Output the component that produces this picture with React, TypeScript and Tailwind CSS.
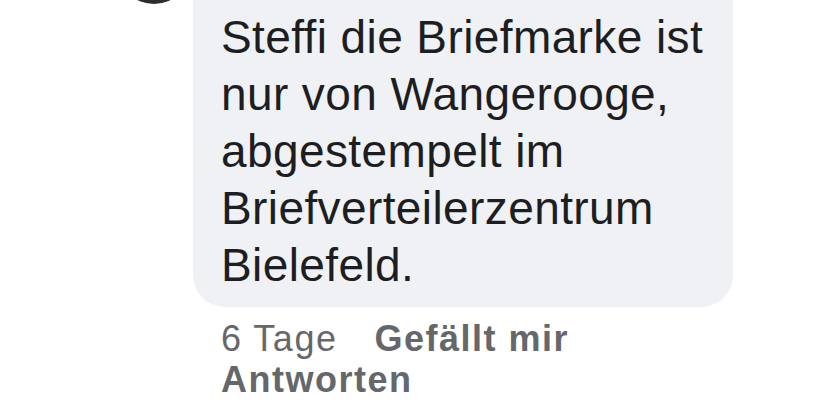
import React from 'react';

const lines = [
  'Steffi die Briefmarke ist',
  'nur von Wangerooge,',
  'abgestempelt im',
  'Briefverteilerzentrum',
  'Bielefeld.',
];

export default function App() {
  return (
    <div className="w-[828px] h-[408px] overflow-hidden bg-white" style={{ fontFamily: '"Liberation Sans", Arial, sans-serif' }}>
      <div className="flex items-start -mt-[68px]">
        {/* avatar, mostly scrolled out of view */}
        <div className="ml-[118px] w-[72px] h-[72px] shrink-0 rounded-full bg-[#2e2e2e]" />

        <div className="ml-[3px] flex flex-col">
          {/* comment bubble */}
          <div className="w-[540px] rounded-[32px] bg-[#f0f1f4] pt-[77px] pb-[13px] pl-[28px] pr-[20px]">
            <p className="text-[46px] leading-[57px] tracking-[0.4px] text-[#1c1e21]">
              {lines.map((l, i) => (
                <span key={i} className="block whitespace-nowrap">{l}</span>
              ))}
            </p>
          </div>

          {/* meta row */}
          <div className="mt-[11px] pl-[28px] w-[420px] flex flex-wrap gap-x-[37px] text-[36px] leading-[41px] tracking-[1.5px] text-[#65676b]">
            <span>6 Tage</span>
            <span className="font-bold">Gefällt mir</span>
            <span className="font-bold">Antworten</span>
          </div>
        </div>
      </div>
    </div>
  );
}
